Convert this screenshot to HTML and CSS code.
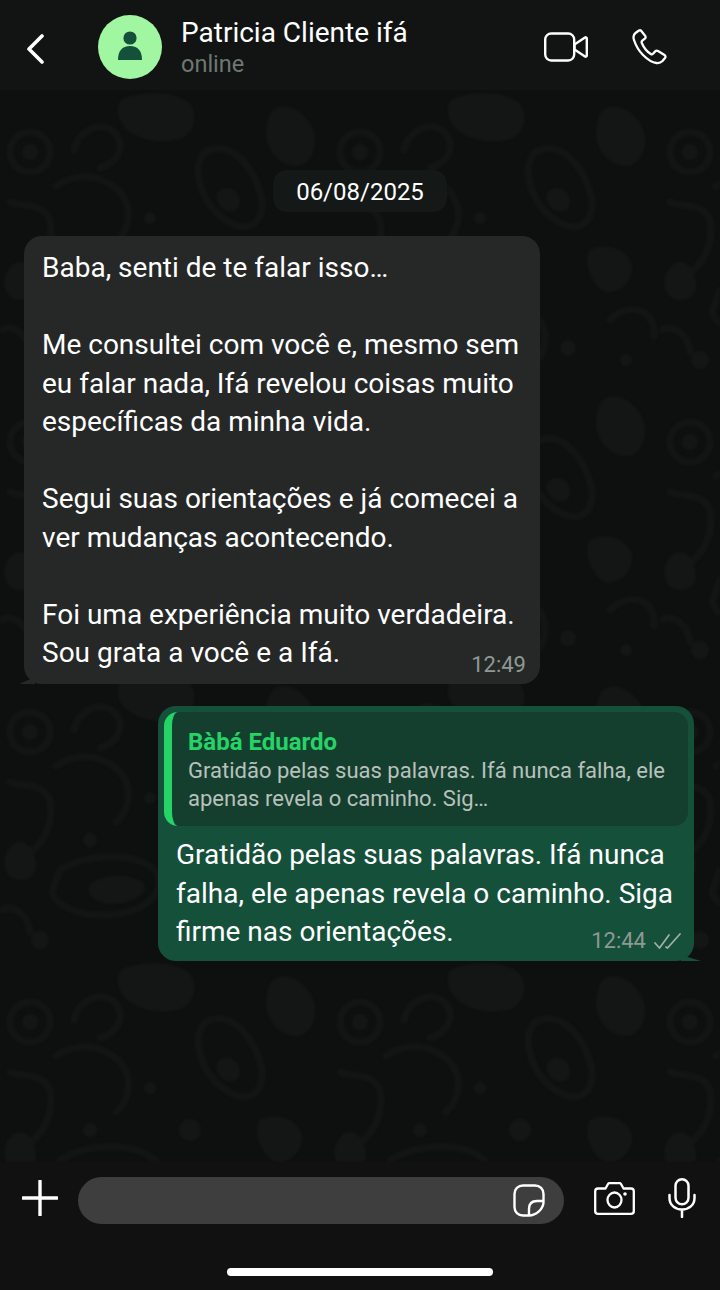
FILE: index.html
```html
<!DOCTYPE html>
<html lang="pt-BR">
<head>
    <meta charset="UTF-8">
    <title>Patricia Cliente ifá</title>
    <meta name="viewport" content="width=device-width, initial-scale=1">
    <link rel="stylesheet" href="styles.css">
</head>
<body>
    <div class="phone">
        <header class="topbar">
            <svg class="back" width="18" height="30" viewBox="0 0 18 30"><path d="M16 2 3 15l13 13" fill="none" stroke="#fff" stroke-width="3.600" stroke-linecap="round" stroke-linejoin="round"/></svg>
            <div class="avatar">
                <svg width="30" height="34" viewBox="0 0 30 34"><circle cx="15" cy="8" r="6.600" fill="#14503a"/><path d="M3 30c0-9 4-14 12-14s12 5 12 14z" fill="#14503a"/></svg>
            </div>
            <div class="contact">
                <div class="contact-name">Patricia Cliente ifá</div>
                <div class="contact-status">online</div>
            </div>
            <svg class="video" width="44" height="30" viewBox="0 0 44 30"><rect x="1.200" y="1.500" width="29" height="27" rx="6" fill="none" stroke="#fff" stroke-width="2.400"/><path d="M30.500 12.500 41 5.500c.8-.5 1.800 0 1.800 1v17c0 1-1 1.500-1.800 1l-10.500-7z" fill="none" stroke="#fff" stroke-width="2.400" stroke-linejoin="round"/></svg>
            <svg class="call" width="36" height="36" viewBox="0 0 36 36"><path d="M7 1.500 3.500 4C1.500 5.500 1 8 2 11c2 6 5 11 9 15 4 4 9 7.500 13.500 8 2.500.3 4.500-.5 6-2l2.500-3c.8-1 .6-2.300-.5-3l-6.500-4c-1-.6-2-.4-2.800.4l-2.200 2.400c-.6.600-1.400.7-2.200.2-3.300-2-7.300-7-9-11-.4-1-.2-1.700.5-2.300l2.500-2c.9-.8 1-1.800.5-2.800L9.500 2.300C9 1.300 8 1 7 1.500z" fill="none" stroke="#fff" stroke-width="2.300" stroke-linejoin="round"/></svg>
        </header>

        <main class="chat">
            <svg class="wallpaper" width="720" height="1072" aria-hidden="true">
                <defs>
                    <pattern id="doodle" width="330" height="290" patternUnits="userSpaceOnUse">
                        <g fill="none" stroke="#131514" stroke-width="7" stroke-linecap="round" stroke-linejoin="round">
                            <circle cx="30" cy="62" r="20"/>
                            <path d="M56 96c20-14 44-12 62 4 16 16 12 40-2 52M10 112c16 6 32 0 40 18 4 24-6 44-24 56"/>
                            <path d="M74 60c4-20 28-30 40-18s6 30-14 36"/>
                            <path d="M210 60c24-8 46 20 52 50 2 20-10 30-24 26-24-8-38-30-40-54 0-10 4-20 12-22z"/>
                            <path d="M60 200c30-18 80-18 96 2 10 18-8 38-38 42-30 4-60-4-66-22z"/>
                            <path d="M170 250c-2-22 16-36 30-28 18 10 20 34 6 50M280 230c20-20 46-10 44 16"/>
                            <path d="M152 30c16-16 30-18 34 0M0 240c14-6 28 4 30 22"/>
                        </g>
                        <g fill="#141615">
                            <path d="M124 8c24-8 54-6 66 6 10 14 2 34-14 36-22 4-44-2-54-16-6-10-6-22 2-26z"/>
                            <path d="M276 18c14-6 32 6 38 24 4 16-4 34-18 34-16 0-28-14-30-30 0-12 2-24 10-28z"/>
                            <path d="M90 214c16-12 44-10 54 0 4 10-10 18-30 20-16 0-30-8-24-20z"/>
                            <path d="M220 100c10-6 20 2 20 12s-12 12-18 6-8-14-2-18z"/>
                            <path d="M8 180c10-14 22-8 26 6 6 14-2 24-14 24-14 0-20-16-12-30z"/>
                            <path d="M260 160c16-8 36-2 42 14 2 16-12 30-26 28-14-4-24-32-16-42z"/>
                            <circle cx="30" cy="62" r="8"/>
                            <circle cx="90" cy="170" r="7"/>
                            <circle cx="190" cy="170" r="11"/>
                            <circle cx="150" cy="128" r="6"/>
                            <circle cx="238" cy="258" r="8"/>
                            <circle cx="296" cy="270" r="6"/>
                            <circle cx="40" cy="270" r="9"/>
                        </g>
                    </pattern>
                </defs>
                <rect width="720" height="1072" fill="url(#doodle)"/>
            </svg>

            <div class="date-pill">06/08/2025</div>

            <div class="bubble bubble-in">
                <p class="bubble-text">Baba, senti de te falar isso…<br><br>Me consultei com você e, mesmo sem<br>eu falar nada, Ifá revelou coisas muito<br>específicas da minha vida.<br><br>Segui suas orientações e já comecei a<br>ver mudanças acontecendo.<br><br>Foi uma experiência muito verdadeira.<br>Sou grata a você e a Ifá.</p>
                <span class="time">12:49</span>
            </div>

            <div class="bubble bubble-out">
                <div class="quote">
                    <div class="quote-name">Bàbá Eduardo</div>
                    <div class="quote-text">Gratidão pelas suas palavras. Ifá nunca falha, ele<br>apenas revela o caminho. Sig…</div>
                </div>
                <p class="bubble-text">Gratidão pelas suas palavras. Ifá nunca<br>falha, ele apenas revela o caminho. Siga<br>firme nas orientações.</p>
                <span class="time">12:44
                    <svg width="27" height="17" viewBox="0 0 27 17"><path d="M1 10l4.500 5L15 2M12 14l1.500 1L26 1" fill="none" stroke="#a3b0a9" stroke-width="1.700" stroke-linecap="round" stroke-linejoin="round"/></svg>
                </span>
            </div>
        </main>

        <footer class="composer">
            <div class="composer-row">
                <svg class="plus" width="36" height="36" viewBox="0 0 36 36"><path d="M18 1v34M1 18h34" stroke="#fff" stroke-width="3.400" stroke-linecap="round"/></svg>
                <div class="field">
                    <svg width="32" height="33" viewBox="0 0 32 33"><path d="M10 1.500h12c5 0 8.500 3.500 8.500 8.500v8C30.500 25 23 31.500 16 31.500h-6c-5 0-8.500-3.500-8.500-8.500V10C1.500 5 5 1.500 10 1.500z" fill="none" stroke="#fff" stroke-width="2.400"/><path d="M30 17h-6c-5 0-8 3-8 8v6" fill="none" stroke="#fff" stroke-width="2.400"/></svg>
                </div>
                <svg class="camera" width="41" height="33" viewBox="0 0 41 33"><path d="M4 6.500h7.500l2.500-4.500c.3-.5.800-.8 1.400-.8h10.200c.6 0 1.100.3 1.400.8l2.500 4.500H37c1.600 0 2.800 1.200 2.800 2.800v19.900c0 1.600-1.200 2.600-2.800 2.600H4c-1.600 0-2.800-1-2.800-2.600V9.300C1.200 7.700 2.400 6.500 4 6.500z" fill="none" stroke="#fff" stroke-width="2.300" stroke-linejoin="round"/><ellipse cx="20.500" cy="18" rx="7" ry="7.500" fill="none" stroke="#fff" stroke-width="2.300"/><circle cx="31" cy="12" r="1.800" fill="#fff"/></svg>
                <svg class="mic" width="28" height="40" viewBox="0 0 28 40"><rect x="7.500" y="1.300" width="13" height="25" rx="6.500" fill="none" stroke="#fff" stroke-width="2.500"/><path d="M1.500 17v3c0 7 5.500 11.500 12.500 11.500S26.500 27 26.500 20v-3M14 31.500V39" fill="none" stroke="#fff" stroke-width="2.500" stroke-linecap="round"/></svg>
            </div>
            <div class="home-bar"></div>
        </footer>
    </div>
</body>
</html>
```

FILE: styles.css
```css
html, body { margin: 0; padding: 0; background: #111; }
.phone { width: 720px; height: 1290px; display: flex; flex-direction: column; overflow: hidden; font-family: Roboto, "Liberation Sans", sans-serif; color: #fff; }

.topbar { height: 90px; flex: none; display: flex; align-items: center; background: #121414; position: relative; z-index: 1; }
.back { margin-left: 26px; margin-top: 8px; flex: none; }
.avatar { width: 64px; height: 64px; margin-left: 54px; margin-top: 4px; flex: none; border-radius: 50%; background: #a1f6a1; display: flex; align-items: center; justify-content: center; }
.contact { margin-left: 19px; flex: 1; margin-top: 3px; }
.contact-name { font-size: 28px; line-height: 34px; }
.contact-status { font-size: 23.500px; line-height: 28px; color: #6e7872; }
.video { flex: none; margin-top: 4px; }
.call { flex: none; margin: 4px 52px 0 44px; }

.chat { flex: 1; position: relative; background: #0e0f0f; display: flex; flex-direction: column; padding: 80px 0 0; box-sizing: border-box; }
.wallpaper { position: absolute; left: 0; top: 0; filter: blur(1px); }

.date-pill { position: relative; align-self: center; width: 174px; height: 42px; border-radius: 14px; background: #141918; font-size: 24px; line-height: 44px; text-align: center; }

.bubble { position: relative; box-sizing: border-box; border-radius: 18px; }
.bubble-text { margin: 0; font-size: 28px; line-height: 38.500px; }
.time { position: absolute; display: flex; align-items: center; gap: 8px; font-size: 22px; line-height: 24px; color: #8f9993; }

.bubble-in { width: 516px; height: 448px; margin: 24px 0 0 24px; padding: 13px 18px; background: #262828; }
.bubble-in::before { content: ""; position: absolute; left: -5px; bottom: 0; border-bottom: 7px solid #262828; border-left: 16px solid transparent; }
.bubble-in .time { right: 14px; bottom: 7px; }

.bubble-out { width: 536px; height: 255px; margin: 22px 0 0 158px; padding: 6px; background: #15503a; }
.bubble-out::after { content: ""; position: absolute; right: -7px; bottom: 0; border-bottom: 6px solid #15503a; border-right: 20px solid transparent; }
.bubble-out .bubble-text { padding: 10px 12px; }
.bubble-out .time { right: 13px; bottom: 8px; }

.quote { height: 114px; box-sizing: border-box; padding: 15px 16px 0 16px; border-left: 8px solid #25d366; border-radius: 14px; background: #143f2e; }
.quote-name { font-size: 24px; line-height: 30px; font-weight: 700; color: #25d366; }
.quote-text { font-size: 22px; line-height: 28px; color: #b9c1bc; }

.composer { height: 128px; flex: none; background: #111; position: relative; }
.composer-row { display: flex; align-items: center; height: 47px; margin-top: 15px; padding-left: 22px; }
.plus { flex: none; margin-top: -6px; }
.field { width: 486px; height: 47px; margin-left: 20px; box-sizing: border-box; padding: 7px 19px 0 0; border-radius: 24px; background: #3e3e3e; display: flex; justify-content: flex-end; align-items: flex-start; flex: none; }
.camera { flex: none; margin: -5px 0 0 30px; }
.mic { flex: none; margin: -6px 0 0 33px; }
.home-bar { width: 266px; height: 8px; margin: 44px auto 0; border-radius: 4px; background: #fff; }
```
